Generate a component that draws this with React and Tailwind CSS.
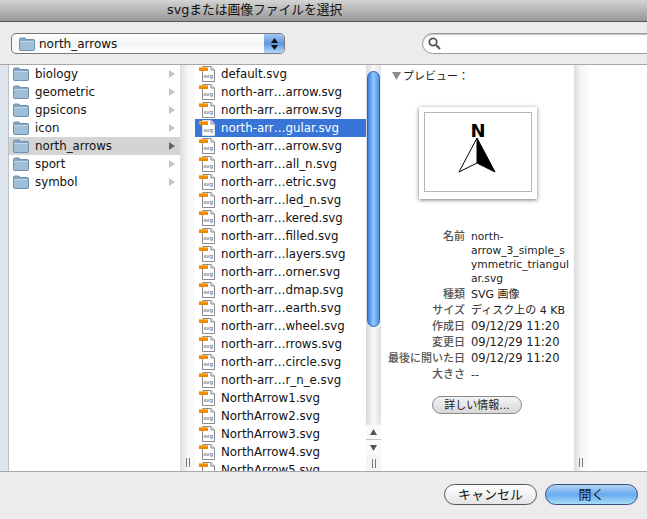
const FONT = "font-['DejaVu_Sans','Noto_Sans_CJK_JP',sans-serif]";

const FOLDERS = ['biology', 'geometric', 'gpsicons', 'icon', 'north_arrows', 'sport', 'symbol'];

const FILES = [
  'default.svg',
  'north-arr…arrow.svg',
  'north-arr…arrow.svg',
  'north-arr…gular.svg',
  'north-arr…arrow.svg',
  'north-arr…all_n.svg',
  'north-arr…etric.svg',
  'north-arr…led_n.svg',
  'north-arr…kered.svg',
  'north-arr…filled.svg',
  'north-arr…layers.svg',
  'north-arr…orner.svg',
  'north-arr…dmap.svg',
  'north-arr…earth.svg',
  'north-arr…wheel.svg',
  'north-arr…rrows.svg',
  'north-arr…circle.svg',
  'north-arr…r_n_e.svg',
  'NorthArrow1.svg',
  'NorthArrow2.svg',
  'NorthArrow3.svg',
  'NorthArrow4.svg',
  'NorthArrow5.svg',
];

const INFO = [
  ['種類', 'SVG 画像'],
  ['サイズ', 'ディスク上の 4 KB'],
  ['作成日', '09/12/29 11:20'],
  ['変更日', '09/12/29 11:20'],
  ['最後に開いた日', '09/12/29 11:20'],
  ['大きさ', '--'],
];

function FolderIcon() {
  return (
    <svg width="16" height="14" viewBox="0 0 16 14" className="shrink-0">
      <path d="M0.5 2.5 Q0.5 1 2 1 L6 1 L7 2.5 L14.5 2.5 Q15.5 2.5 15.5 3.5 L15.5 12.5 Q15.5 13.5 14.5 13.5 L1.5 13.5 Q0.5 13.5 0.5 12.5 Z" fill="#7fa6c6" stroke="#6d8fac" />
      <rect x="1" y="4" width="14" height="9" fill="#9fbfd8" />
      <rect x="1" y="4" width="14" height="1" fill="#c0d6e6" />
    </svg>
  );
}

function FileIcon({ selected }) {
  return (
    <svg width="17" height="16" viewBox="0 0 17 16" className="shrink-0">
      <path d="M3.5 0.5 L12 0.5 L15.5 4 L15.5 15.5 L3.5 15.5 Z" fill="#fff" stroke={selected ? '#ddd' : '#8a8a8a'} />
      <path d="M12 0.5 L12 4 L15.5 4" fill="#e8e8e8" stroke="#8a8a8a" />
      <rect x="0" y="1" width="9" height="4" fill="#f08c00" />
      <rect x="0" y="1" width="9" height="1" fill="#ffb84a" />
      <text x="4.5" y="11.5" fontSize="5.5" fill="#555" fontFamily="DejaVu Sans">svg</text>
    </svg>
  );
}

function Chevron({ dark }) {
  return (
    <svg width="6" height="8" viewBox="0 0 6 8" className="shrink-0">
      <path d="M0 0 L6 4 L0 8 Z" fill={dark ? '#666' : '#c4c4c4'} />
    </svg>
  );
}

function Grip() {
  return (
    <div className="flex h-[9px] gap-[2px]">
      <div className="h-full w-px bg-[#777]" />
      <div className="h-full w-px bg-[#777]" />
    </div>
  );
}

// Simple resize strip between the columns
function Strip({ width }) {
  return (
    <div className={`flex shrink-0 flex-col items-center justify-end bg-gradient-to-r from-[#dcdcdc] via-[#f6f6f6] to-[#fbfbfb] pb-[4px] ${width}`}>
      <Grip />
    </div>
  );
}

function Scrollbar() {
  return (
    <div className="flex w-[15px] shrink-0 flex-col bg-gradient-to-r from-[#dcdcdc] via-[#f8f8f8] to-[#e6e6e6]">
      <div className="h-[6px] shrink-0" />
      <div className="mx-[1px] h-[256px] shrink-0 rounded-full border border-[#2f62c4] bg-gradient-to-r from-[#3f7fe0] via-[#8fc8f8] to-[#4f90e8]" />
      <div className="h-[98px] shrink-0 rounded-b-full bg-gradient-to-r from-[#d6d6d6] via-[#fbfbfb] to-[#dedede]" />
      <div className="flex h-[15px] shrink-0 items-center justify-center border-b border-[#c4c4c4] bg-[#fafafa]">
        <svg width="7" height="6" viewBox="0 0 7 6"><path d="M3.5 0 L7 6 L0 6 Z" fill="#555" /></svg>
      </div>
      <div className="flex h-[15px] shrink-0 items-center justify-center bg-[#fafafa]">
        <svg width="7" height="6" viewBox="0 0 7 6"><path d="M0 0 L7 0 L3.5 6 Z" fill="#555" /></svg>
      </div>
      <div className="flex flex-1 items-center justify-center bg-[#f4f4f4]">
        <Grip />
      </div>
    </div>
  );
}

function Preview() {
  return (
    <div className="flex w-[193px] shrink-0 flex-col bg-white text-[11px] text-[#222]">
      <div className="flex h-[20px] items-center pl-[11px] pt-[2px]">
        <svg width="9" height="8" viewBox="0 0 9 8"><path d="M0 0 L9 0 L4.5 8 Z" fill="#8c8c8c" /></svg>
        <span className="ml-[2px] leading-none">プレビュー：</span>
      </div>

      {/* Simple thumbnail card */}
      <div className="ml-[38px] mt-[22px] h-[92px] w-[118px] bg-white p-[5px] shadow-[0_1px_4px_rgba(0,0,0,0.55)]">
        <div className="flex h-[80px] w-[108px] flex-col items-center border border-[#b5b5b5] pt-[10px]">
          <span className="text-[18px] font-bold leading-[16px] text-black">N</span>
          <svg width="38" height="36" viewBox="0 0 38 36" className="-ml-[2px] -mt-[2px]">
            <path d="M19 1 L19 26 L37 35 Z" fill="#000" stroke="#000" />
            <path d="M19 1 L1 35 L19 26" fill="none" stroke="#000" strokeWidth="1" />
          </svg>
        </div>
      </div>

      <div className="mt-[31px] flex">
        <div className="w-[84px] shrink-0 text-right font-medium leading-[14px] text-[#555]">名前</div>
        <div className="ml-[6px] w-[100px] text-[10.7px] leading-[14px]">
          <div>north-</div>
          <div className="whitespace-nowrap">arrow_3_simple_s</div>
          <div className="whitespace-nowrap">ymmetric_triangul</div>
          <div>ar.svg</div>
        </div>
      </div>
      <div className="mt-[1px]">
        {INFO.map(([label, value]) => (
          <div key={label} className="flex h-[16px] items-center">
            <div className="w-[84px] shrink-0 whitespace-nowrap text-right font-medium text-[#555]">{label}</div>
            <div className={`ml-[6px] whitespace-nowrap ${value.startsWith('09') ? 'text-[11.5px]' : ''}`}>{value}</div>
          </div>
        ))}
      </div>
      <button className="ml-[51px] mt-[13px] flex h-[18px] w-[90px] items-center justify-center rounded-full border border-[#8a8a8a] bg-gradient-to-b from-[#f4f4f4] to-[#d8d8d8] text-[11px] leading-none">
        詳しい情報...
      </button>
    </div>
  );
}

export default function App() {
  return (
    <div className={`flex h-[519px] w-[647px] flex-col overflow-hidden bg-[#ececec] text-[11.8px] text-[#111] ${FONT}`}>
      {/* Simple title bar */}
      <div className="flex h-[22px] shrink-0 items-center border-b border-[#555] bg-gradient-to-b from-[#d4d4d4] to-[#979797] pl-[167px] text-[12.75px] leading-none">
        svgまたは画像ファイルを選択
      </div>

      {/* Simple toolbar with path popup and search */}
      <div className="flex h-[43px] shrink-0 items-start overflow-hidden border-b border-[#a8a8a8] pl-[11px] pt-[11px]">
        <div className="flex h-[21px] w-[274px] shrink-0 overflow-hidden rounded-[5px] border border-[#777] bg-gradient-to-b from-white via-[#f4f4f4] to-white">
          <div className="flex flex-1 items-center gap-[4px] pl-[7px]">
            <FolderIcon />
            <span className="text-[12px]">north_arrows</span>
          </div>
          <div className="flex w-[20px] flex-col items-center justify-center gap-[2px] bg-gradient-to-b from-[#a5c8f0] via-[#5d96e0] to-[#b5d8f8]">
            <svg width="7" height="5" viewBox="0 0 7 5"><path d="M3.5 0 L7 5 L0 5 Z" fill="#111" /></svg>
            <svg width="7" height="5" viewBox="0 0 7 5"><path d="M0 0 L7 0 L3.5 5 Z" fill="#111" /></svg>
          </div>
        </div>
        <div className="ml-[137px] flex h-[21px] w-[260px] shrink-0 items-center rounded-full border border-[#999] bg-white pl-[5px] shadow-[inset_0_1px_1px_rgba(0,0,0,0.25)]">
          <svg width="13" height="13" viewBox="0 0 13 13">
            <circle cx="5" cy="5" r="3.7" fill="none" stroke="#555" strokeWidth="1.8" />
            <path d="M8 8 L12 12" stroke="#555" strokeWidth="2.2" />
          </svg>
        </div>
      </div>

      {/* Simple column browser */}
      <div className="flex h-[407px] shrink-0 border-b border-[#a8a8a8] bg-white">
        <div className="w-[9px] shrink-0 border-r border-[#b9c0c8] bg-[#dde4ec]" />
        <div className="w-[171px] shrink-0">
          {FOLDERS.map((name) => (
            <div key={name} className={`flex h-[18px] items-center pl-[4px] pr-[5px] ${name === 'north_arrows' ? 'bg-[#d4d4d4]' : ''}`}>
              <FolderIcon />
              <span className="ml-[6px] flex-1 pt-[2px]">{name}</span>
              <Chevron dark={name === 'north_arrows'} />
            </div>
          ))}
        </div>
        <Strip width="w-[15px]" />
        <div className="w-[171px] shrink-0 overflow-hidden">
          {FILES.map((name, i) => (
            <div key={i} className={`flex h-[18px] items-center gap-[5px] pl-[4px] ${i === 3 ? 'bg-[#3875d7] text-white' : ''}`}>
              <FileIcon selected={i === 3} />
              <span className="whitespace-nowrap pt-[2px]">{name}</span>
            </div>
          ))}
        </div>
        <Scrollbar />
        <Preview />
        <Strip width="w-[14px]" />
        <div className="flex-1 bg-white" />
      </div>

      {/* Simple footer buttons */}
      <div className="flex flex-1 items-start justify-end gap-[8px] pr-[9px] pt-[12px]">
        <button className="flex h-[21px] w-[93px] items-center justify-center rounded-full border border-[#555] bg-gradient-to-b from-white via-[#f2f2f2] to-[#e4e4e4] text-[13px] leading-none">
          キャンセル
        </button>
        <button className="flex h-[21px] w-[93px] items-center justify-center rounded-full border border-[#34507c] bg-gradient-to-b from-[#b4d4f4] via-[#6aaaf0] to-[#a8def8] text-[13px] leading-none">
          開く
        </button>
      </div>
    </div>
  );
}
